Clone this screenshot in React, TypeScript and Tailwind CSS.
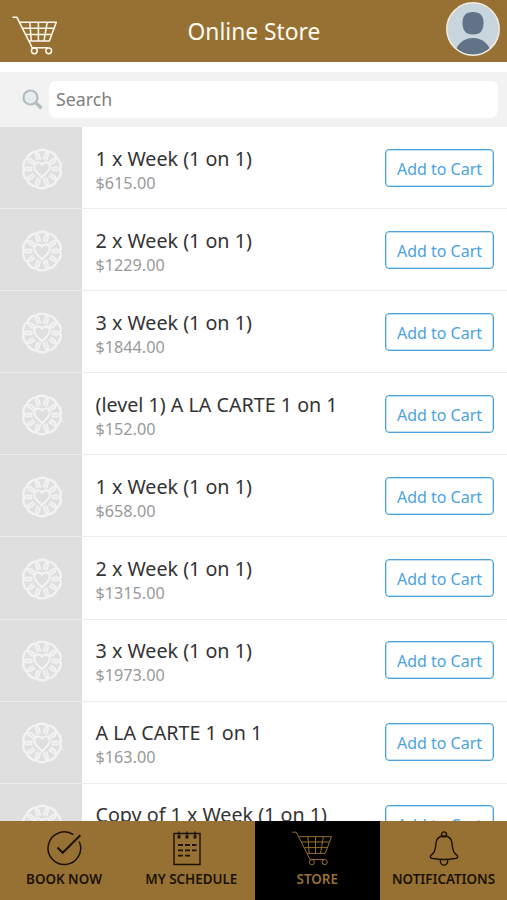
interface Product {
  name: string;
  price: string;
}

const products: Product[] = [
  { name: '1 x Week (1 on 1)', price: '$615.00' },
  { name: '2 x Week (1 on 1)', price: '$1229.00' },
  { name: '3 x Week (1 on 1)', price: '$1844.00' },
  { name: '(level 1) A LA CARTE 1 on 1', price: '$152.00' },
  { name: '1 x Week (1 on 1)', price: '$658.00' },
  { name: '2 x Week (1 on 1)', price: '$1315.00' },
  { name: '3 x Week (1 on 1)', price: '$1973.00' },
  { name: 'A LA CARTE 1 on 1', price: '$163.00' },
  { name: 'Copy of 1 x Week (1 on 1)', price: '$658.00' },
];

function CartIcon({ className, strokeWidth }: { className: string; strokeWidth: number }) {
  return (
    <svg viewBox="0 0 46 39" className={className} fill="none" stroke="currentColor" strokeWidth={strokeWidth} strokeLinejoin="round">
      <path d="M.5 1.2H4.8L20.8 32.8M8 6.2H44.3L37.3 25H17.2M10.8 12.2H42M14 18.5H39.8M17.8 6.2L19.3 25M26.4 6.2V25M35.2 6.2L32 25" />
      <path d="M20.8 31.8H36" />
      <circle cx="22.3" cy="34.8" r="2.9" />
      <circle cx="36.7" cy="34.8" r="2.9" />
    </svg>
  );
}

function CheckIcon() {
  return (
    <svg viewBox="0 0 35 35" className="h-[35px] w-[35px]" fill="none" stroke="currentColor" strokeWidth="1.5">
      <path d="M26.4 3.7A16.3 16.3 0 1 0 32.2 10.5" />
      <path d="M10.5 16.5L15.7 21.8L33.3 4.2" strokeWidth="2" />
    </svg>
  );
}

function CalendarIcon() {
  return (
    <svg viewBox="0 0 28 35" className="mr-[8px] h-[35px] w-7" fill="none" stroke="currentColor" strokeWidth="1.4">
      <path d="M1 2.5H27V33.5H1Z" />
      <path d="M6 .5V6M14 .5V6M22 .5V6" />
      <path d="M6 4.5V7.5M14 4.5V7.5M22 4.5V7.5" strokeWidth="3" />
      <path d="M5 14H10M12 14H17M19 14H23.5M5 19.3H10M12 19.3H17M19 19.3H23.5M5 24.6H10M12 24.6H17" strokeWidth="1.8" />
    </svg>
  );
}

function BellIcon() {
  return (
    <svg viewBox="0 0 30 35" className="h-[35px] w-[30px]" fill="none" stroke="currentColor" strokeWidth="1.4">
      <circle cx="15" cy="3.4" r="2.5" />
      <path d="M15 5C9.2 5 7 8.7 6.8 13.4C6.6 19 5.5 22.3 1.6 24.7C.7 26.5 2 27.3 4 27.5C10 28.6 20 28.6 26 27.5C28 27.3 29.3 26.5 28.4 24.7C24.5 22.3 23.4 19 23.2 13.4C23 8.7 20.8 5 15 5Z" />
      <path d="M11.4 28.4V30.5A3.6 3.6 0 0 0 18.6 30.5V28.4" />
    </svg>
  );
}

const petals = [0, 36, 72, 108, 144, 180, 216, 252, 288, 324];

function ProductLogo() {
  return (
    <svg viewBox="-21 -21 42 42" className="h-[42px] w-[42px] text-[#f3f3f3]" fill="none" stroke="currentColor" strokeLinecap="round" strokeLinejoin="round">
      {petals.map(angle => (
        <g key={angle} transform={`rotate(${angle})`}>
          <path d="M-5.6 -16.2C-4.8 -20.2 4.8 -20.2 5.6 -16.2" strokeWidth="2.4" />
          <path d="M-1.9 -10.2L-3.4 -15.2M1.9 -10.2L3.4 -15.2" strokeWidth="2" />
        </g>
      ))}
      <path
        d="M0 8.2C-4 4.8 -7.8 1.6 -7.8 -2.4C-7.8 -7 -2 -8 0 -4.2C2 -8 7.8 -7 7.8 -2.4C7.8 1.6 4 4.8 0 8.2Z"
        fill="#dfdfdf"
        strokeWidth="2"
      />
    </svg>
  );
}

function ProductRow({ product }: { product: Product }) {
  return (
    <div className="flex h-[82.1px] shrink-0 bg-white">
      <div className="flex w-[82px] items-center justify-center border-b border-[#ececec] bg-[#dfdfdf] pt-[2px] pl-[1px]">
        <ProductLogo />
      </div>
      <div className="flex flex-1 items-center justify-between border-b border-[#ececec] pr-[13px] pl-[13.5px]">
        <div className="pt-[4px] whitespace-nowrap">
          <div className="text-[19.7px] leading-[26px] text-[#333]">{product.name}</div>
          <div className="text-[16.2px] leading-[22px] text-[#999]">{product.price}</div>
        </div>
        <button className="h-[38px] w-[109px] rounded-[4px] border border-[#4ba3de] pt-[2px] text-[16px] whitespace-nowrap text-[#4ba3de] ring-1 ring-[#4ba3de]/35 ring-inset">
          Add to Cart
        </button>
      </div>
    </div>
  );
}

const tabs = [
  { label: 'BOOK NOW', icon: <CheckIcon />, active: false },
  { label: 'MY SCHEDULE', icon: <CalendarIcon />, active: false },
  { label: 'STORE', icon: <CartIcon className="mr-[9px] h-[35px] w-[41px]" strokeWidth={1.1} />, active: true },
  { label: 'NOTIFICATIONS', icon: <BellIcon />, active: false },
];

export default function App() {
  return (
    <div className="flex h-[900px] w-[507px] flex-col overflow-hidden bg-white font-['Noto_Sans',sans-serif]">
      <header className="grid h-[62px] shrink-0 grid-cols-[100px_1fr_100px] items-center bg-[#967133] text-[#fffaf0]">
        <CartIcon className="mt-[8px] ml-[12px] h-[39px] w-[46px]" strokeWidth={1.5} />
        <h1 className="pt-[3px] pl-[1px] text-center text-[22.8px] leading-none">Online Store</h1>
        <svg viewBox="0 0 54 54" className="-mt-[4px] mr-[7px] h-[54px] w-[54px] justify-self-end">
          <clipPath id="avatar">
            <circle cx="27" cy="27" r="26" />
          </clipPath>
          <circle cx="27" cy="27" r="26" fill="#c9d5dd" />
          <g fill="#617386" clipPath="url(#avatar)">
            <path d="M27 10C34 10 37.5 14 37.5 20.5C37.5 28 35 32.5 27 32.5C19 32.5 16.5 28 16.5 20.5C16.5 14 20 10 27 10Z" />
            <ellipse cx="27" cy="53" rx="18" ry="17" />
          </g>
          <circle cx="27" cy="27" r="26.2" fill="none" stroke="#f5eee4" strokeWidth="1.5" />
        </svg>
      </header>

      <div className="mt-[10px] flex h-[55px] shrink-0 items-center bg-[#f2f2f2] pr-[9px] pl-[22px]">
        <svg viewBox="0 0 21 21" className="mr-[6px] h-[21px] w-[21px] shrink-0 text-[#b3bdc1]" fill="none" stroke="currentColor">
          <circle cx="8.5" cy="8.5" r="7" strokeWidth="2.2" fill="#e6edf0" />
          <path d="M13.8 13.8L19.5 19.2" strokeWidth="3.4" />
        </svg>
        <input
          className="h-[37px] min-w-0 flex-1 rounded-[7px] bg-white px-[7px] pb-[1px] text-[17.8px] outline-none placeholder:text-[#808080]"
          placeholder="Search"
        />
      </div>

      <main className="flex min-h-0 flex-1 flex-col overflow-hidden">
        {products.map((product, i) => (
          <ProductRow key={i} product={product} />
        ))}
      </main>

      <nav className="grid h-[79px] shrink-0 grid-cols-[128px_126.5px_125.5px_127px] bg-[#967133]">
        {tabs.map(tab => (
          <div
            key={tab.label}
            className={`flex flex-col items-center pt-[10px] ${tab.active ? 'bg-black text-[#967133]' : 'text-[#1b1204]'}`}
          >
            {tab.icon}
            <span className="mt-[4px] text-[13.4px] leading-[18px] font-semibold whitespace-nowrap">{tab.label}</span>
          </div>
        ))}
      </nav>
    </div>
  );
}
